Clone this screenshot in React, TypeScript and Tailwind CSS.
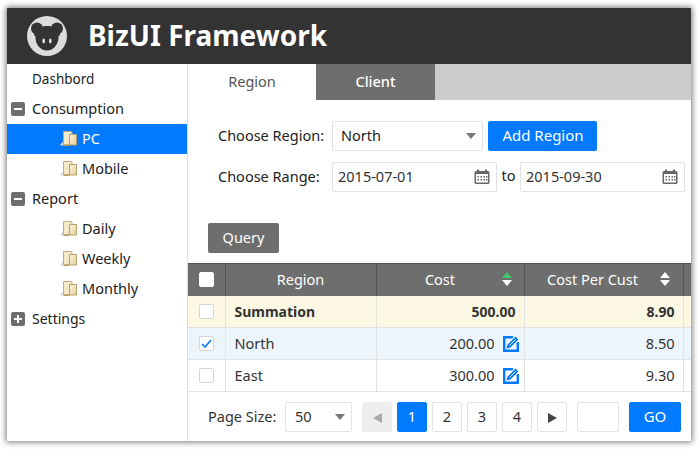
const font = { fontFamily: '"Noto Sans", "Open Sans", sans-serif' };

function Logo() {
  return (
    <svg width="40" height="40" viewBox="0 0 40 40">
      <circle cx="20" cy="20" r="20" fill="#dcdcdc" />
      <circle cx="10" cy="12.500" r="6" fill="#333" />
      <circle cx="30" cy="12.500" r="6" fill="#333" />
      <path d="M20 10c5 0 8 2 10 5 3 .5 3.500 2 3 3.500-.5 1.200-1.200 1.500-1.500 2 .5 6-4 14-11.500 14S8 27 8.500 20.500c-.3-.5-1-.8-1.500-2-.5-1.500 0-3 3-3.500 2-3 5-5 10-5z" fill="#333" />
      <ellipse cx="16.700" cy="25" rx="1.300" ry="2.400" fill="#e8e8e8" />
      <ellipse cx="23.300" cy="25" rx="1.300" ry="2.400" fill="#e8e8e8" />
    </svg>
  );
}

function Folder() {
  return (
    <svg width="17" height="16" viewBox="0 0 17 16" className="shrink-0">
      <defs>
        <linearGradient id="fold" x1="0" y1="0" x2="1" y2="1">
          <stop offset="0" stopColor="#fdf7e2" />
          <stop offset="1" stopColor="#e3cb98" />
        </linearGradient>
      </defs>
      <path d="M0 15l3.500-4v4.500H1z" fill="#d4d4d0" />
      <path d="M3.500 1.500h8l.5 1.500v11.500H3.500z" fill="#f4e9c8" stroke="#c4ad7c" strokeWidth="1" />
      <path d="M9.500 4.500h7v10.500h-7z" fill="url(#fold)" stroke="#b9a06a" strokeWidth="1" />
      <path d="M3.500 15.500h6" stroke="#b9a06a" strokeWidth="1" />
    </svg>
  );
}

function Toggle({ open }: { open: boolean }) {
  return (
    <span className="relative block h-[14px] w-[14px] rounded-[2px] bg-[#6e6e6e]">
      <span className="absolute left-[3px] top-[6px] h-[2px] w-[8px] bg-white" />
      {!open && <span className="absolute left-[6px] top-[3px] h-[8px] w-[2px] bg-white" />}
    </span>
  );
}

function TopItem({ label, toggle, className = "pb-[1px]" }: { label: string; toggle?: "open" | "closed"; className?: string }) {
  return (
    <div className="flex h-[30px] items-center pl-[4px] text-[#222]">
      <span className="flex w-[21px] justify-start">{toggle && <Toggle open={toggle === "open"} />}</span>
      <span className={className}>{label}</span>
    </div>
  );
}

function SubItem({ label, active }: { label: string; active?: boolean }) {
  return (
    <div className={`flex h-[30px] items-center gap-[5px] pl-[53px] ${active ? "bg-[#007aff] text-white" : "text-[#222]"}`}>
      <span className="pb-[2px]"><Folder /></span>
      <span className="pb-[1px]">{label}</span>
    </div>
  );
}

function Caret() {
  return <span className="h-0 w-0 border-x-[5.5px] border-t-[6px] border-x-transparent border-t-[#777]" />;
}

function CalendarIcon() {
  return (
    <svg width="16" height="16" viewBox="0 0 16 16">
      <path d="M2 2h12a1.500 1.500 0 0 1 1.500 1.500v10A1.500 1.500 0 0 1 14 15H2a1.500 1.500 0 0 1-1.500-1.500v-10A1.500 1.500 0 0 1 2 2z" fill="#666" />
      <rect x="3" y="0.500" width="2" height="3" fill="#666" />
      <rect x="11" y="0.500" width="2" height="3" fill="#666" />
      <rect x="2" y="5" width="12" height="8.500" fill="#fff" />
      {[3.5, 6.5, 9.5, 12].map((x) => (
        <g key={x} fill="#666">
          <rect x={x} y="7" width="1.500" height="1.500" />
          <rect x={x} y="10" width="1.500" height="1.500" />
        </g>
      ))}
    </svg>
  );
}

function DateInput({ value }: { value: string }) {
  return (
    <div className="flex h-[30px] w-[165px] items-center justify-between rounded-[2px] border border-[#e2e2e2] pl-[5px] pr-[6px] text-[#333]">
      <span>{value}</span>
      <CalendarIcon />
    </div>
  );
}

function Sort({ up }: { up?: boolean }) {
  return (
    <span className="flex flex-col gap-[2px]">
      <span className={`h-0 w-0 border-x-[5px] border-b-[6px] border-x-transparent ${up ? "border-b-[#3fc96b]" : "border-b-white"}`} />
      <span className="h-0 w-0 border-x-[5px] border-t-[6px] border-x-transparent border-t-white" />
    </span>
  );
}

function EditIcon() {
  return (
    <svg width="16" height="16" viewBox="0 0 16 16" className="ml-[8px] shrink-0">
      <path d="M10 1.200H1.200v13.600h13.600V6" fill="none" stroke="#007aff" strokeWidth="2.400" />
      <path d="M5 11l9.500-9.500" stroke="#fff" strokeWidth="5.500" />
      <path d="M5.500 10.500l8.500-8.500" stroke="#007aff" strokeWidth="4" />
      <path d="M6.500 9.500l6-6" stroke="#fff" strokeWidth="1" />
      <path d="M3.500 12.500l.8-3.400 2.600 2.600z" fill="#007aff" />
    </svg>
  );
}

function Check({ checked, solid }: { checked?: boolean; solid?: boolean }) {
  return (
    <span className={`flex h-[15px] w-[15px] items-center justify-center rounded-[2px] border ${solid ? "border-white bg-white" : "border-[#d5d5d5] bg-white"}`}>
      {checked && (
        <svg width="11" height="11" viewBox="0 0 11 11">
          <path d="M1 6l3 3 6-7" fill="none" stroke="#007aff" strokeWidth="1.600" />
        </svg>
      )}
    </span>
  );
}

const rows = [
  { region: "North", cost: "200.00", per: "8.50", checked: true, bg: "bg-[#edf5fc]" },
  { region: "East", cost: "300.00", per: "9.30", checked: false, bg: "bg-white" },
];

function PageBox({ children, className = "" }: { children: React.ReactNode; className?: string }) {
  return (
    <div className={`flex h-[30px] w-[30px] items-center justify-center rounded-[2px] border ${className}`}>{children}</div>
  );
}

export default function App() {
  return (
    <div className="h-[449px] w-[698px] overflow-hidden bg-white pl-[7px] pt-[8px] text-[14.5px]" style={font}>
      <div className="flex h-[433px] w-[684px] flex-col bg-white shadow-[0_0_6px_1px_rgba(0,0,0,0.55)]">
        {/* Header */}
        <header className="flex h-[56px] shrink-0 items-center bg-[#333] pl-[20px]">
          <Logo />
          <h1 className="ml-[21px] pb-[2px] text-[28px] font-bold leading-none text-white">BizUI Framework</h1>
        </header>

        <div className="flex min-h-0 flex-1">
          {/* Sidebar */}
          <aside className="w-[181px] shrink-0 border-r border-[#ddd]">
            <TopItem label="Dashbord" className="text-[13.5px]" />
            <TopItem label="Consumption" toggle="open" />
            <SubItem label="PC" active />
            <SubItem label="Mobile" />
            <TopItem label="Report" toggle="open" />
            <SubItem label="Daily" />
            <SubItem label="Weekly" />
            <SubItem label="Monthly" />
            <TopItem label="Settings" toggle="closed" className="pb-[1px] text-[14px]" />
          </aside>

          {/* Main */}
          <main className="flex min-w-0 flex-1 flex-col">
            <div className="flex h-[36px] shrink-0 bg-[#ccc]">
              <div className="flex w-[128px] items-center justify-center bg-white pb-[1px] text-[#555]">Region</div>
              <div className="flex w-[119px] items-center justify-center bg-[#6e6e6e] pb-[1px] font-medium text-white">Client</div>
            </div>

            <div className="h-[163px] shrink-0 pl-[20px] pt-[21px] text-[#222]">
              <div className="flex h-[30px] items-center">
                <span className="w-[124px] pb-[1px] pl-[10px]">Choose Region:</span>
                <div className="flex h-[30px] w-[151px] items-center justify-between rounded-[2px] border border-[#e2e2e2] pl-[8px] pr-[6px]">
                  <span className="pb-[1px]">North</span>
                  <Caret />
                </div>
                <div className="ml-[5px] flex h-[30px] w-[109px] items-center justify-center rounded-[2px] bg-[#007aff] pb-[1px] pl-[1px] text-[15px] text-white">Add Region</div>
              </div>
              <div className="mt-[11px] flex h-[30px] items-center">
                <span className="w-[124px] pb-[1px] pl-[10px]">Choose Range:</span>
                <DateInput value="2015-07-01" />
                <span className="w-[23px] pb-[3px] text-center">to</span>
                <DateInput value="2015-09-30" />
              </div>
              <div className="mt-[31px] flex h-[30px] w-[71px] items-center justify-center rounded-[2px] bg-[#6e6e6e] pb-[1px] text-white">Query</div>
            </div>

            {/* Table */}
            <table className="w-[503px] shrink-0 table-fixed border-collapse text-[#333]">
              <colgroup>
                <col className="w-[37px]" />
                <col className="w-[151px]" />
                <col className="w-[148px]" />
                <col className="w-[159px]" />
                <col className="w-[8px]" />
              </colgroup>
              <thead>
                <tr className="h-[32px] bg-[#6e6e6e] text-white">
                  <th className="border-r border-t border-[#555] font-normal">
                    <span className="flex justify-center"><Check solid /></span>
                  </th>
                  <th className="border-r border-t border-[#555] font-normal">Region</th>
                  <th className="border-r border-t border-[#555] font-normal">
                    <span className="relative block pr-[20px] text-center">
                      Cost
                      <span className="absolute right-[12px] top-[3px]"><Sort up /></span>
                    </span>
                  </th>
                  <th className="border-r border-t border-[#555] font-normal">
                    <span className="relative block pr-[22px] text-center">
                      Cost Per Cust
                      <span className="absolute right-[13px] top-[3px]"><Sort /></span>
                    </span>
                  </th>
                  <th className="border-t border-[#555]" />
                </tr>
              </thead>
              <tbody>
                <tr className="h-[32px] bg-[#fdf8e4] text-[14px] font-bold">
                  <td className="border-b border-r border-[#e2e2e2]">
                    <span className="flex justify-center"><Check /></span>
                  </td>
                  <td className="border-b border-r border-[#e2e2e2] pl-[9px]">Summation</td>
                  <td className="border-b border-r border-[#e2e2e2] pr-[8px] text-right">500.00</td>
                  <td className="border-b border-r border-[#e2e2e2] pr-[8px] text-right">8.90</td>
                  <td className="border-b border-[#e2e2e2]" />
                </tr>
                {rows.map((r) => (
                  <tr key={r.region} className={`h-[32px] ${r.bg}`}>
                    <td className="border-b border-r border-[#e2e2e2]">
                      <span className="flex justify-center"><Check checked={r.checked} /></span>
                    </td>
                    <td className="border-b border-r border-[#e2e2e2] pl-[9px]">{r.region}</td>
                    <td className="border-b border-r border-[#e2e2e2] pr-[5px]">
                      <span className="flex items-center justify-end">{r.cost}<EditIcon /></span>
                    </td>
                    <td className="border-b border-r border-[#e2e2e2] pr-[8px] text-right">{r.per}</td>
                    <td className="border-b border-[#e2e2e2]" />
                  </tr>
                ))}
              </tbody>
            </table>

            {/* Pagination */}
            <div className="flex flex-1 items-center pl-[20px] text-[#333]">
              <span className="w-[77px]">Page Size:</span>
              <div className="flex h-[30px] w-[67px] items-center justify-between rounded-[2px] border border-[#e2e2e2] pl-[9px] pr-[6px]">
                <span>50</span>
                <Caret />
              </div>
              <div className="ml-[10px] flex gap-[5px]">
                <PageBox className="border-[#eee] bg-[#eee]">
                  <span className="mt-[2px] h-0 w-0 border-y-[5px] border-r-[9px] border-y-transparent border-r-[#aaa]" />
                </PageBox>
                <PageBox className="border-[#007aff] bg-[#007aff] text-white">1</PageBox>
                <PageBox className="border-[#e2e2e2]">2</PageBox>
                <PageBox className="border-[#e2e2e2]">3</PageBox>
                <PageBox className="border-[#e2e2e2]">4</PageBox>
                <PageBox className="border-[#e2e2e2]">
                  <span className="mt-[2px] h-0 w-0 border-y-[5px] border-l-[9px] border-y-transparent border-l-[#444]" />
                </PageBox>
              </div>
              <div className="ml-[10px] h-[30px] w-[42px] rounded-[2px] border border-[#e2e2e2]" />
              <div className="ml-[10px] flex h-[30px] w-[52px] items-center justify-center rounded-[2px] bg-[#007aff] text-[15px] text-white">GO</div>
            </div>
          </main>
        </div>
      </div>
    </div>
  );
}
